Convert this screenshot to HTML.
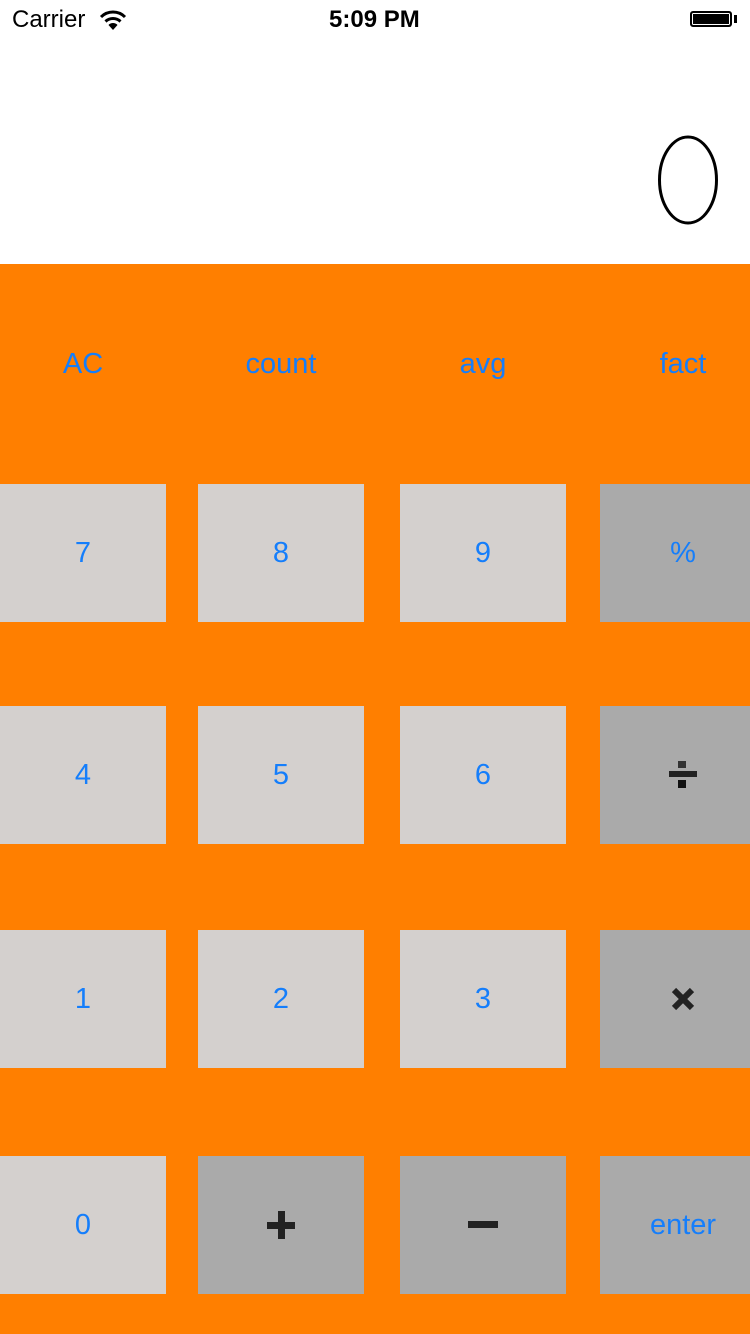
<!DOCTYPE html>
<html><head><meta charset="utf-8"><style>
body{margin:0;width:750px;height:1334px;position:relative;background:#fff;font-family:"Liberation Sans",sans-serif;overflow:hidden}
.o{position:absolute;left:0;top:264px;width:750px;height:1070px;background:#FF7F00}
.b{position:absolute;display:flex;align-items:center;justify-content:center;color:#157EFB;font-size:29px;height:138px;box-sizing:border-box}
.l{background:#D4D0CE}.d{background:#AAAAAA}
.r{padding-left:16px}
.t{position:absolute;color:#157EFB;font-size:29px;top:348px;transform:translateX(-50%)}
.s{position:absolute;font-size:24px;color:#000;top:6px}
</style></head><body>
<div class="s" style="left:12px">Carrier</div>
<svg style="position:absolute;left:99px;top:9px" width="28" height="22" viewBox="0 0 28 22"><path d="M2 8 A17 17 0 0 1 26 8" stroke="#000" stroke-width="3" fill="none"/><path d="M6.5 12.5 A11 11 0 0 1 21.5 12.5" stroke="#000" stroke-width="3" fill="none"/><path d="M14 21 L9.5 16 A6 6 0 0 1 18.5 16 Z" fill="#000"/></svg>
<div class="s" style="left:329px;font-weight:bold">5:09 PM</div>
<div style="position:absolute;left:690px;top:11px;width:42px;height:16px;border:2px solid #000;border-radius:3px;background:#000;box-sizing:border-box;box-shadow:inset 0 0 0 1px #fff"></div>
<div style="position:absolute;left:734px;top:15px;width:3px;height:8px;background:#000"></div>
<svg style="position:absolute;left:656px;top:134px" width="64" height="92"><ellipse cx="32" cy="46" rx="28.5" ry="43" fill="none" stroke="#000" stroke-width="3"/></svg>
<div class="o"></div>
<div class="t" style="left:83px">AC</div><div class="t" style="left:281px">count</div><div class="t" style="left:483px">avg</div><div class="t" style="left:683px">fact</div>

<div class="b l" style="left:0;width:166px;top:484px">7</div>
<div class="b l" style="left:198px;width:166px;top:484px">8</div>
<div class="b l" style="left:400px;width:166px;top:484px">9</div>
<div class="b d r" style="left:600px;width:150px;top:484px">%</div>

<div class="b l" style="left:0;width:166px;top:706px">4</div>
<div class="b l" style="left:198px;width:166px;top:706px">5</div>
<div class="b l" style="left:400px;width:166px;top:706px">6</div>
<div class="b d r" style="left:600px;width:150px;top:706px"><svg width="30" height="28"><rect x="10" y="0" width="8" height="7" fill="#333"/><rect x="1" y="10" width="28" height="6" fill="#222"/><rect x="10" y="19" width="8" height="8" fill="#111"/></svg></div>

<div class="b l" style="left:0;width:166px;top:930px">1</div>
<div class="b l" style="left:198px;width:166px;top:930px">2</div>
<div class="b l" style="left:400px;width:166px;top:930px">3</div>
<div class="b d r" style="left:600px;width:150px;top:930px"><svg width="26" height="24"><path d="M4 3 L22 21 M22 3 L4 21" stroke="#222" stroke-width="6"/></svg></div>

<div class="b l" style="left:0;width:166px;top:1156px">0</div>
<div class="b d" style="left:198px;width:166px;top:1156px"><svg width="30" height="30"><rect x="12" y="1" width="7" height="28" fill="#222"/><rect x="1" y="12" width="28" height="7" fill="#222"/></svg></div>
<div class="b d" style="left:400px;width:166px;top:1156px"><svg width="30" height="8"><rect x="0" y="0" width="30" height="7" fill="#222"/></svg></div>
<div class="b d r" style="left:600px;width:150px;top:1156px">enter</div>
</body></html>
